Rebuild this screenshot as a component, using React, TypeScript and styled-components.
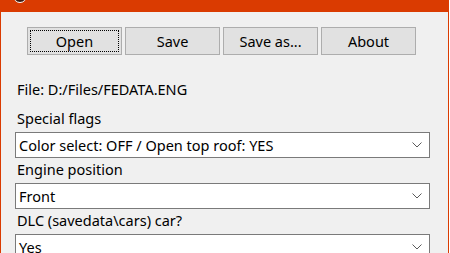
import React from "react";
import styled, { createGlobalStyle } from "styled-components";

const GlobalStyle = createGlobalStyle`
  html, body { margin: 0; padding: 0; background: #ffffff; }
  body { font-family: "Noto Sans", "Liberation Sans", sans-serif; }
`;

const ORANGE = "#da3b01";
const FONT = `"Noto Sans", "Liberation Sans", sans-serif`;

const Window = styled.div`
  width: 449px;
  height: 253px;
  box-sizing: border-box;
  border-left: 1px solid ${ORANGE};
  border-right: 1px solid ${ORANGE};
  background: #f0f0f0;
  overflow: hidden;
  display: flex;
  flex-direction: column;
`;

const TitleBar = styled.div`
  height: 30px;
  margin-top: -18px;
  flex: none;
  background: ${ORANGE};
  display: flex;
  align-items: flex-start;
  padding-left: 12px;
  gap: 10px;
  color: #ffffff;
  font-size: 12px;
  overflow: hidden;
`;

const AppIcon = styled.div`
  width: 12px;
  height: 12px;
  margin-top: 7px;
  border-radius: 50%;
  background: #3a1a10;
  border: 1px solid #ffffff;
`;

const TitleText = styled.span`
  margin-left: 80px;
  margin-top: 3px;
  line-height: 16px;
`;

const Toolbar = styled.div`
  display: flex;
  gap: 3px;
  padding: 15px 0 0 26px;
`;

const Button = styled.button<{ $focused?: boolean }>`
  width: 95px;
  height: 28px;
  box-sizing: border-box;
  margin: 0;
  padding: 0;
  border: 1px solid #adadad;
  background: #e1e1e1;
  font-family: ${FONT};
  font-size: 14.5px;
  color: #000000;
  outline: ${(p) => (p.$focused ? "1px dotted #000000" : "none")};
  outline-offset: -4px;
`;

const Content = styled.div`
  display: flex;
  flex-direction: column;
  padding: 0 18px 0 14px;
`;

const FileLabel = styled.div`
  margin-top: 25px;
  margin-bottom: 8px;
  padding-left: 2px;
  font-size: 14.5px;
  line-height: 19px;
  color: #000000;
`;

const FieldLabel = styled.div`
  padding: 2px 0 4px 2px;
  font-size: 14.5px;
  line-height: 19px;
  color: #000000;
`;

const Combo = styled.div`
  height: 26px;
  box-sizing: border-box;
  border: 1px solid #7a7a7a;
  background: #ffffff;
  display: flex;
  align-items: center;
  justify-content: space-between;
  padding: 0 7px 0 3px;
  font-size: 14.5px;
  color: #000000;
`;

const Chevron = () => (
  <svg width="10" height="6" viewBox="0 0 10 6">
    <path d="M0.5 0.5 L5 5 L9.5 0.5" fill="none" stroke="#5a5a5a" strokeWidth="1" />
  </svg>
);

const fields = [
  { label: "Special flags", value: "Color select: OFF / Open top roof: YES" },
  { label: "Engine position", value: "Front" },
  { label: "DLC (savedata\\cars) car?", value: "Yes" },
];

export default function App() {
  return (
    <>
      <GlobalStyle />
      <Window>
        <TitleBar>
          <AppIcon />
          <TitleText>FEDATA.ENG settings</TitleText>
        </TitleBar>
        <Toolbar>
          <Button $focused>Open</Button>
          <Button>Save</Button>
          <Button>Save as...</Button>
          <Button>About</Button>
        </Toolbar>
        <Content>
          <FileLabel>File: D:/Files/FEDATA.ENG</FileLabel>
          {fields.map((f) => (
            <React.Fragment key={f.label}>
              <FieldLabel>{f.label}</FieldLabel>
              <Combo>
                <span>{f.value}</span>
                <Chevron />
              </Combo>
            </React.Fragment>
          ))}
        </Content>
      </Window>
    </>
  );
}
